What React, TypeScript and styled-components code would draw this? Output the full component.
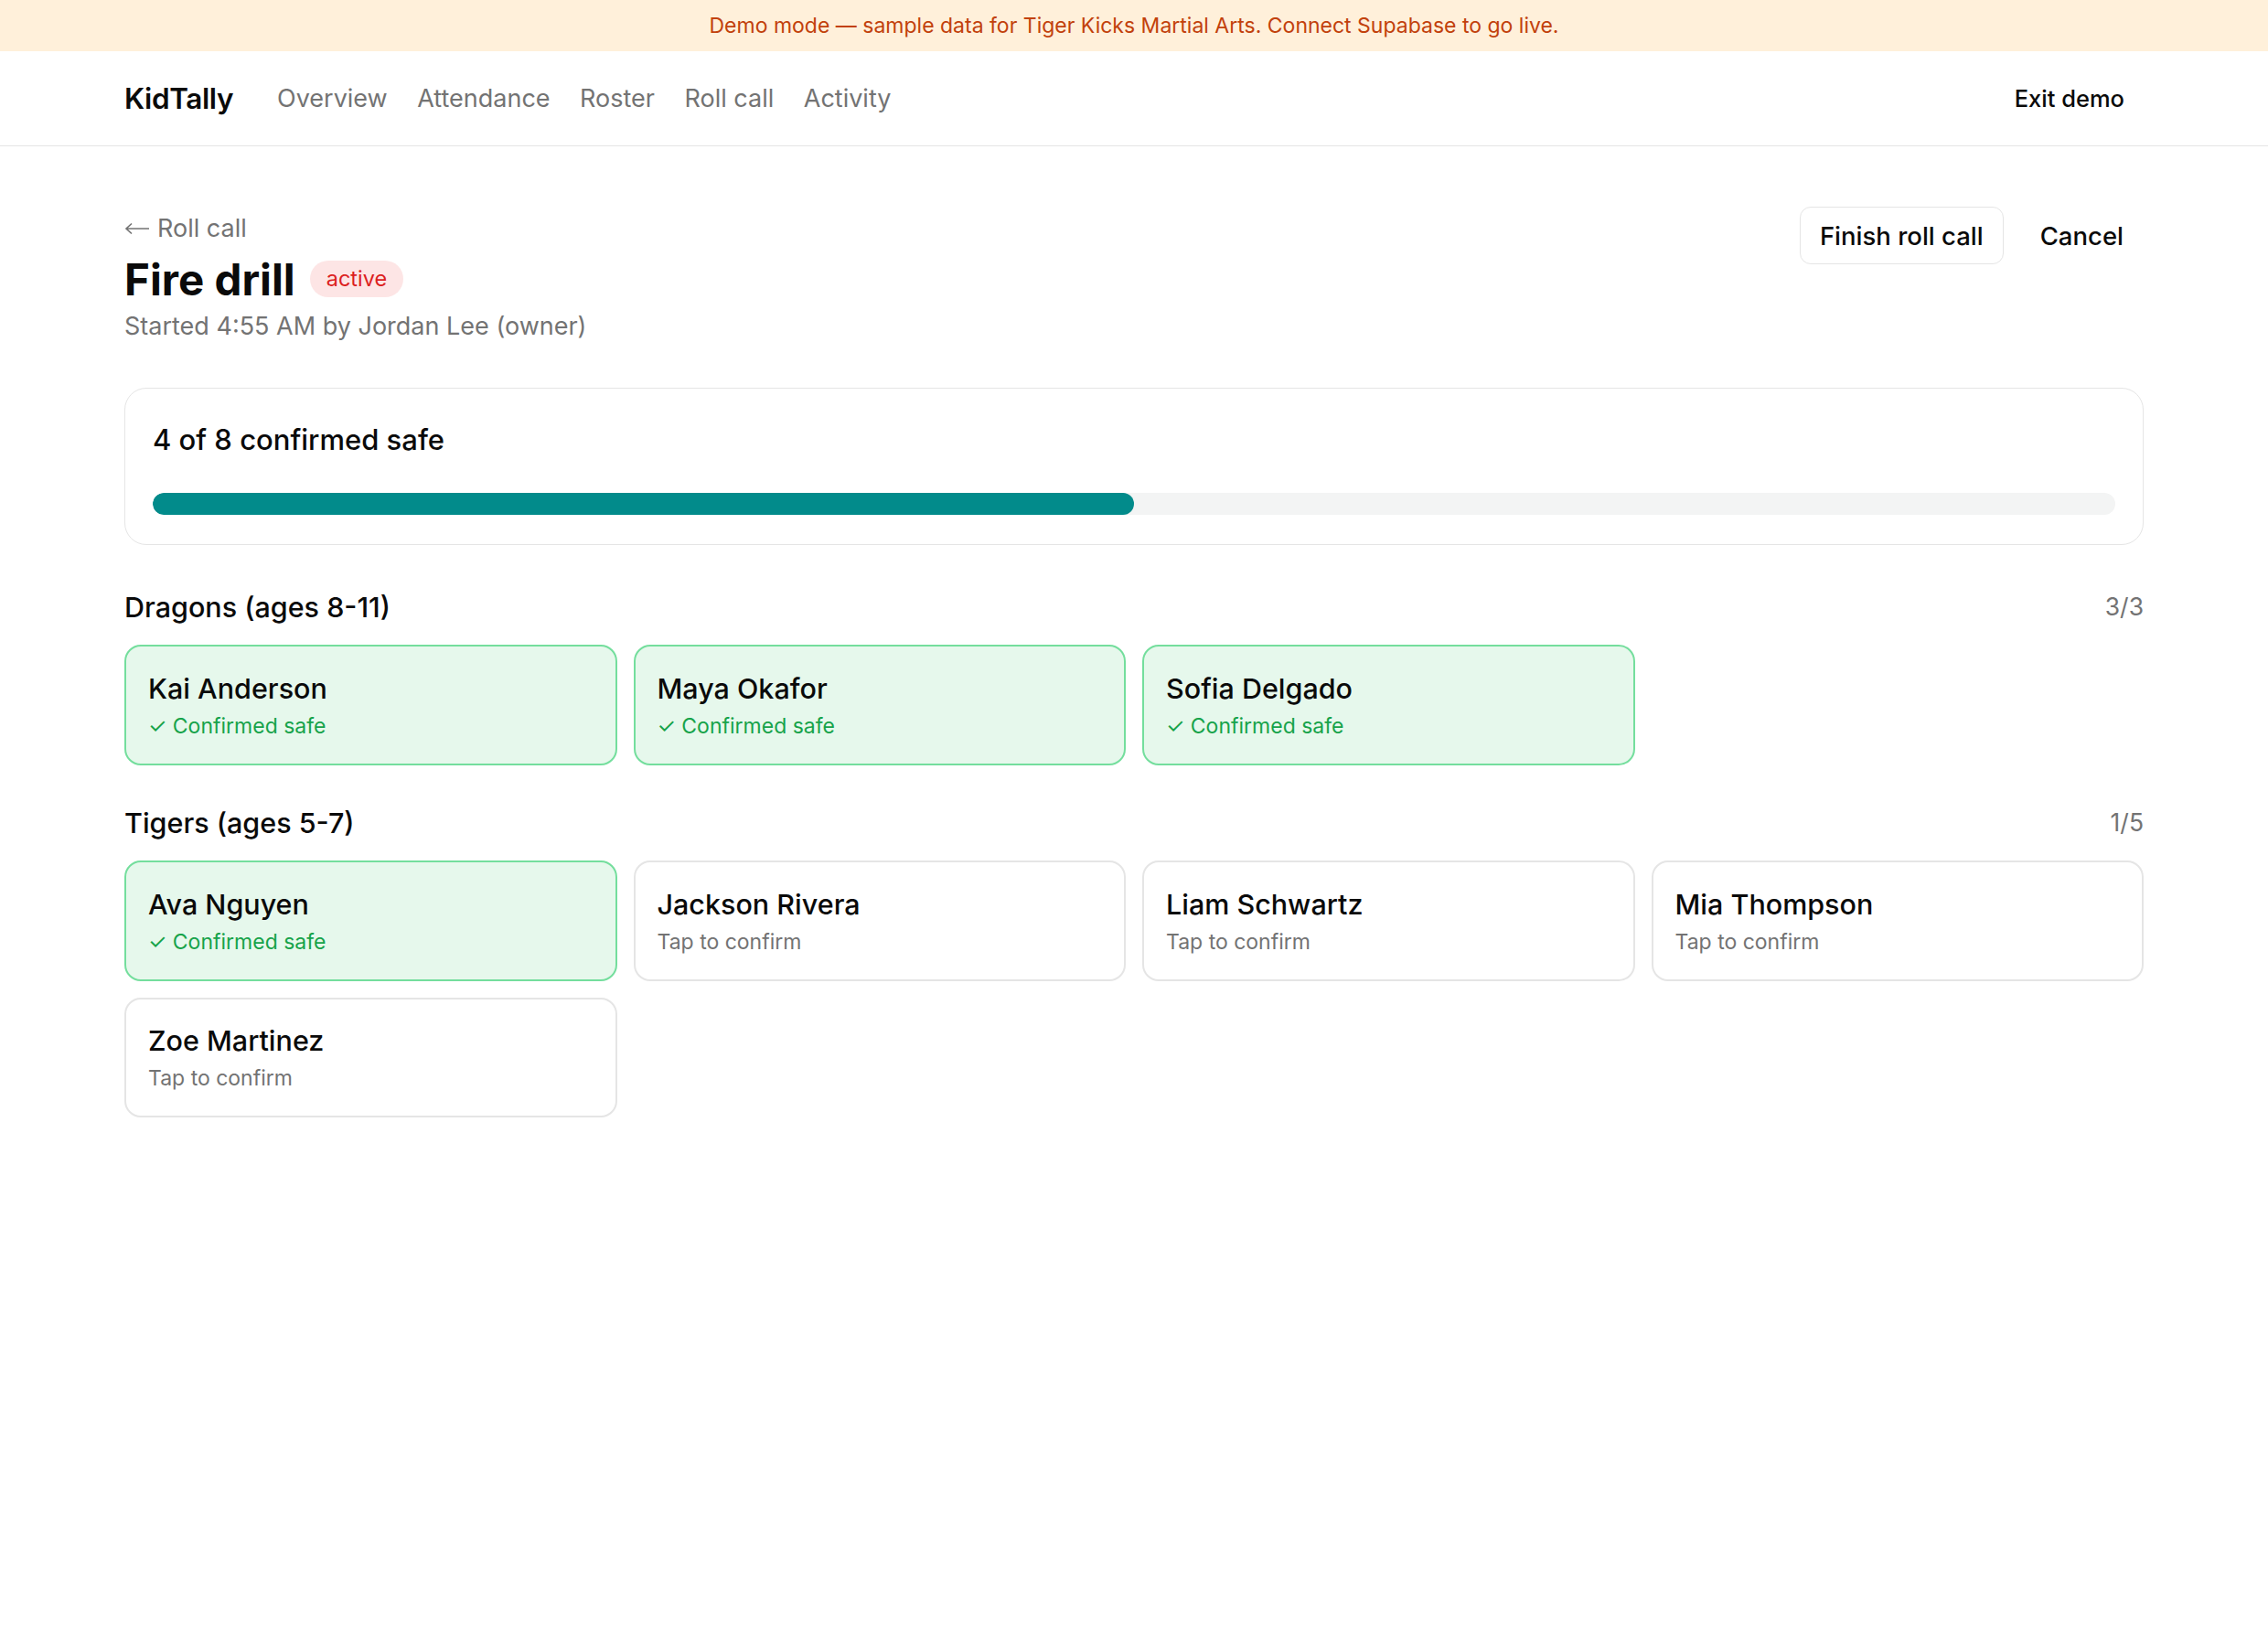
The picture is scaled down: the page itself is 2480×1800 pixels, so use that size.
import { FC } from "react";
import styled, { createGlobalStyle } from "styled-components";

const GlobalStyle = createGlobalStyle`
  body {
    margin: 0;
    background: #ffffff;
    color: #0a0a0a;
    font-family: Inter, "Noto Sans", "Liberation Sans", sans-serif;
  }
`;

const Banner = styled.div`
  height: 56px;
  display: flex;
  align-items: center;
  justify-content: center;
  background-color: #fff0da;
  color: #c2410c;
  font-size: 23px;
`;

const NavBar = styled.header`
  border-bottom: 1.5px solid #e5e5e5;
`;

const Container = styled.div`
  max-width: 2208px;
  margin: 0 auto;
`;

const NavInner = styled(Container)`
  height: 103px;
  display: flex;
  align-items: center;
`;

const Logo = styled.span`
  font-size: 31.5px;
  font-weight: 600;
  letter-spacing: -0.4px;
  margin-right: 48px;
`;

const NavLinks = styled.nav`
  display: flex;
  gap: 32.5px;
  flex: 1;
`;

const NavLink = styled.a`
  font-size: 27px;
  color: #737373;
  text-decoration: none;
`;

const ExitButton = styled.button`
  border: none;
  background: none;
  font-family: inherit;
  font-size: 25.5px;
  font-weight: 500;
  color: #0a0a0a;
  padding: 0 21px;
`;

const Main = styled(Container)`
  padding-top: 66px;
`;

const HeaderRow = styled.div`
  display: flex;
  justify-content: space-between;
  align-items: flex-start;
`;

const BackLink = styled.a`
  display: flex;
  align-items: center;
  gap: 8px;
  font-size: 27px;
  line-height: 48px;
  color: #737373;
`;

const TitleRow = styled.div`
  display: flex;
  align-items: center;
  gap: 16px;
  height: 62px;
`;

const Title = styled.h1`
  margin: 0;
  font-size: 47.5px;
  font-weight: 700;
`;

const Badge = styled.span`
  background: #fde5e5;
  color: #dc1f1f;
  font-size: 23.5px;
  line-height: 40px;
  padding: 0 18px;
  border-radius: 999px;
`;

const Meta = styled.p`
  margin: 0;
  font-size: 27px;
  line-height: 42px;
  color: #737373;
`;

const Actions = styled.div`
  display: flex;
  gap: 18px;
`;

const ActionButton = styled.button<{ $outlined?: boolean }>`
  height: 63px;
  padding: 0 21px;
  border-radius: 12px;
  border: 1.5px solid ${(p) => (p.$outlined ? "#e5e5e5" : "transparent")};
  background: #ffffff;
  font-family: inherit;
  font-size: 27.5px;
  font-weight: 500;
  color: #0a0a0a;
`;

const ProgressCard = styled.section`
  margin-top: 46px;
  border: 1.5px solid #e5e5e5;
  border-radius: 24px;
  padding: 33px 30px 31.5px;
`;

const ProgressLabel = styled.div`
  font-size: 31px;
  font-weight: 500;
  line-height: 45px;
`;

const Track = styled.div`
  margin-top: 36px;
  height: 24px;
  border-radius: 999px;
  background: #f3f4f4;
  overflow: hidden;
`;

const Fill = styled.div`
  height: 100%;
  border-radius: 999px;
  background: #028b8b;
`;

const Sections = styled.div`
  margin-top: 45px;
  display: flex;
  flex-direction: column;
  gap: 40px;
`;

const SectionHead = styled.div`
  display: flex;
  justify-content: space-between;
  align-items: center;
  height: 45px;
`;

const SectionTitle = styled.h2`
  margin: 0;
  font-size: 30.5px;
  font-weight: 500;
`;

const SectionCount = styled.span`
  font-size: 26.5px;
  color: #737373;
`;

const Grid = styled.div`
  margin-top: 19.5px;
  display: grid;
  grid-template-columns: repeat(4, 1fr);
  gap: 18px;
`;

const KidCard = styled.button<{ $safe: boolean }>`
  text-align: left;
  font-family: inherit;
  padding: 24.5px 24px;
  border-radius: 18px;
  border: 2px solid ${(p) => (p.$safe ? "#74de9d" : "#e5e5e5")};
  background: ${(p) => (p.$safe ? "#e6f8ec" : "#ffffff")};
`;

const KidName = styled.div`
  font-size: 30.5px;
  font-weight: 500;
  line-height: 42px;
  color: #0a0a0a;
`;

const KidStatus = styled.div<{ $safe: boolean }>`
  margin-top: 5px;
  font-size: 23px;
  line-height: 31.5px;
  color: ${(p) => (p.$safe ? "#16a34a" : "#737373")};
`;

type Kid = { name: string; safe: boolean };

const groups: { title: string; kids: Kid[] }[] = [
  {
    title: "Dragons (ages 8-11)",
    kids: [
      { name: "Kai Anderson", safe: true },
      { name: "Maya Okafor", safe: true },
      { name: "Sofia Delgado", safe: true },
    ],
  },
  {
    title: "Tigers (ages 5-7)",
    kids: [
      { name: "Ava Nguyen", safe: true },
      { name: "Jackson Rivera", safe: false },
      { name: "Liam Schwartz", safe: false },
      { name: "Mia Thompson", safe: false },
      { name: "Zoe Martinez", safe: false },
    ],
  },
];

const BackArrow: FC = () => (
  <svg width="28" height="14" viewBox="0 0 28 14" fill="none">
    <path d="M27 7H2M8 1.5L2 7l6 5.5" stroke="#737373" strokeWidth="1.6" />
  </svg>
);

const App: FC = () => {
  const all = groups.flatMap((g) => g.kids);
  const safe = all.filter((k) => k.safe).length;
  return (
    <>
      <GlobalStyle />
      <Banner>
        Demo mode — sample data for Tiger Kicks Martial Arts. Connect Supabase to go live.
      </Banner>
      <NavBar>
        <NavInner>
          <Logo>KidTally</Logo>
          <NavLinks>
            <NavLink>Overview</NavLink>
            <NavLink>Attendance</NavLink>
            <NavLink>Roster</NavLink>
            <NavLink>Roll call</NavLink>
            <NavLink>Activity</NavLink>
          </NavLinks>
          <ExitButton>Exit demo</ExitButton>
        </NavInner>
      </NavBar>
      <Main>
        <HeaderRow>
          <div>
            <BackLink>
              <BackArrow />
              Roll call
            </BackLink>
            <TitleRow>
              <Title>Fire drill</Title>
              <Badge>active</Badge>
            </TitleRow>
            <Meta>Started 4:55 AM by Jordan Lee (owner)</Meta>
          </div>
          <Actions>
            <ActionButton $outlined>Finish roll call</ActionButton>
            <ActionButton>Cancel</ActionButton>
          </Actions>
        </HeaderRow>

        <ProgressCard>
          <ProgressLabel>
            {safe} of {all.length} confirmed safe
          </ProgressLabel>
          <Track>
            <Fill style={{ width: `${(safe / all.length) * 100}%` }} />
          </Track>
        </ProgressCard>

        <Sections>
          {groups.map((g) => (
            <section key={g.title}>
              <SectionHead>
                <SectionTitle>{g.title}</SectionTitle>
                <SectionCount>
                  {g.kids.filter((k) => k.safe).length}/{g.kids.length}
                </SectionCount>
              </SectionHead>
              <Grid>
                {g.kids.map((k) => (
                  <KidCard key={k.name} $safe={k.safe}>
                    <KidName>{k.name}</KidName>
                    <KidStatus $safe={k.safe}>
                      {k.safe ? "✓ Confirmed safe" : "Tap to confirm"}
                    </KidStatus>
                  </KidCard>
                ))}
              </Grid>
            </section>
          ))}
        </Sections>
      </Main>
    </>
  );
};

export default App;
